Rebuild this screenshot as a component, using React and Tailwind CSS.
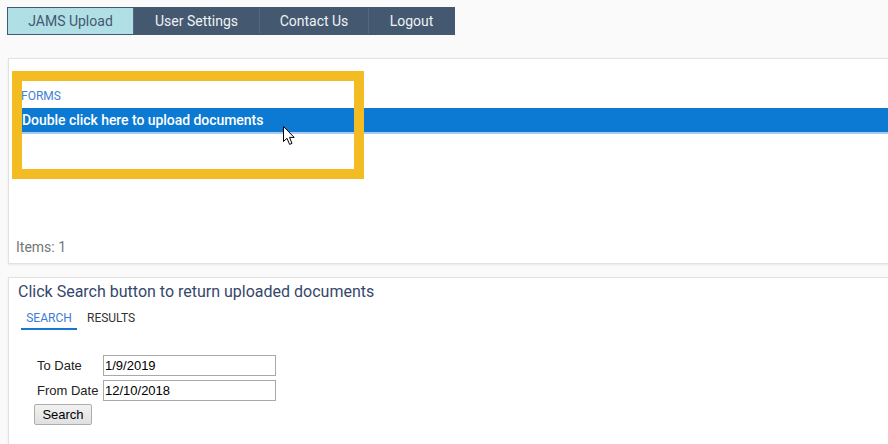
export default function App() {
  const tabs = [
    { label: 'User Settings', w: 'w-[126px]' },
    { label: 'Contact Us', w: 'w-[109px]' },
    { label: 'Logout', w: 'w-[86px]' },
  ];

  return (
    <div className="relative w-full h-[444px] overflow-hidden bg-[#fafafa] font-['Roboto',sans-serif]">
      {/* Top nav */}
      <div className="pt-[7px] pl-[7px]">
        <div className="inline-flex h-[28px] border border-[#44586f] bg-[#44586f] text-[14px]">
          <div className="w-[125px] flex items-center justify-center bg-[#b0e0e6] text-[#44586f]">JAMS Upload</div>
          {tabs.map((t) => (
            <div key={t.label} className={`${t.w} flex items-center justify-center border-l border-[#53677e] text-[#eef2f6]`}>
              {t.label}
            </div>
          ))}
        </div>
      </div>

      {/* Forms panel */}
      <div className="ml-[8px] mt-[23px] w-[900px] h-[206px] bg-white border border-[#e2e2e2] shadow-[0_1px_2px_rgba(0,0,0,0.08)] flex flex-col">
        <div className="pt-[30px] pl-[12px]">
          <div className="text-[12px] leading-[15px] text-[#3f7fd6]">FORMS</div>
          <div className="mt-[4px] h-[26px] bg-[#0c79d2] border-b-[2px] border-[#a8c9f2] flex items-center pl-[1px] text-[14px] font-medium tracking-[-0.05px] text-white">
            Double click here to upload documents
          </div>
        </div>
        <div className="mt-auto mb-[5px] pl-[7px] text-[14px] text-[#767676]">Items: 1</div>
      </div>

      {/* Search panel */}
      <div className="ml-[8px] mt-[13px] w-[900px] h-[200px] bg-white border border-[#e2e2e2] shadow-[0_1px_2px_rgba(0,0,0,0.08)]">
        <div className="pl-[9px] pt-[4px] text-[16px] leading-[20px] text-[#35476b]">Click Search button to return uploaded documents</div>
        <div className="flex items-end mt-[7px] pl-[12px] text-[12px]">
          <div className="w-[56px] text-center text-[#3a7bd5] pb-[1px] border-b-[2px] border-[#1676d2]">SEARCH</div>
          <div className="ml-[10px] pb-[3px] text-[#333]">RESULTS</div>
        </div>
        <div className="mt-[25px] pl-[26px] font-['Liberation_Sans',Arial,sans-serif] text-[13px] text-[#222]">
          <div className="flex items-center h-[21px]">
            <span className="w-[68px] pl-[2px]">To Date</span>
            <input className="w-[173px] h-[21px] border border-[#a9a9a9] bg-white px-[1px] text-[13px] text-black outline-none" defaultValue="1/9/2019" />
          </div>
          <div className="flex items-center h-[21px] mt-[4px]">
            <span className="w-[68px] pl-[2px]">From Date</span>
            <input className="w-[173px] h-[21px] border border-[#a9a9a9] bg-white px-[1px] text-[13px] text-black outline-none" defaultValue="12/10/2018" />
          </div>
          <button className="mt-[3px] -ml-[1px] w-[58px] h-[21px] border border-[#adadad] rounded-[2px] bg-gradient-to-b from-[#f2f2f2] to-[#e0e0e0] text-[13px] text-black">
            Search
          </button>
        </div>
      </div>

      {/* Highlight frame overlay */}
      <div className="absolute left-[12px] top-[71px] w-[352px] h-[108px] border-[10px] border-[#f4bc23] pointer-events-none" />

      {/* Mouse cursor */}
      <svg className="absolute left-[283px] top-[126px]" width="13" height="20" viewBox="0 0 13 20">
        <path d="M0.5 0.5 L0.5 15.5 L4 12.3 L6.6 18.4 L9 17.4 L6.5 11.4 L11.2 11.4 Z" fill="white" stroke="black" strokeWidth="1" strokeLinejoin="round" />
      </svg>
    </div>
  );
}
